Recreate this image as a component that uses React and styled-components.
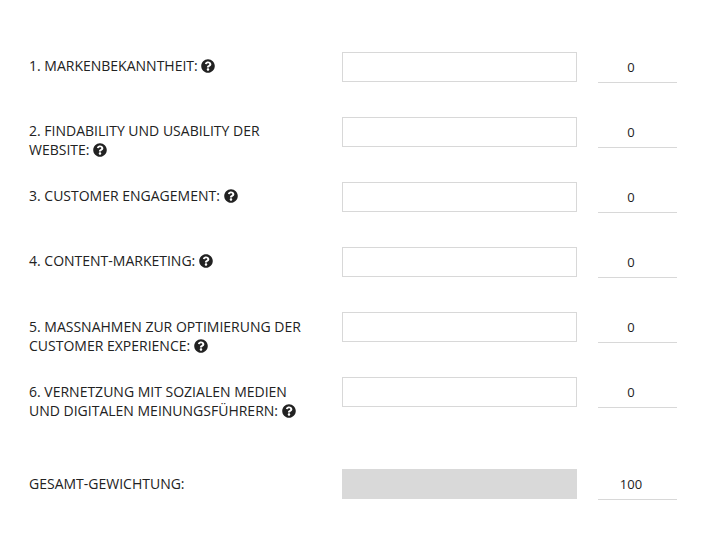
import React from "react";
import styled, { createGlobalStyle } from "styled-components";
import { FaQuestionCircle } from "react-icons/fa";

const GlobalStyle = createGlobalStyle`
  * { box-sizing: border-box; }
  body { margin: 0; background: #fff; }
`;

const Form = styled.main`
  width: 726px;
  height: 548px;
  padding: 52px 0 0 29px;
  background: #fff;
  color: #222;
  font-family: "Open Sans", sans-serif;
  overflow: hidden;
`;

const Row = styled.div`
  display: grid;
  grid-template-columns: 313px 235px 100px;
  align-items: start;
  height: ${(p) => (p.$last ? "92px" : "65.1px")};
`;

const Label = styled.label`
  padding-top: 4.2px;
  font-size: 14px;
  line-height: 19px;
  white-space: nowrap;
`;

const Line = styled.span`
  display: block;
`;

const HelpIcon = styled(FaQuestionCircle)`
  width: 14px;
  height: 14px;
  vertical-align: -2px;
`;

const Field = styled.input`
  width: 235px;
  height: 30px;
  padding: 0 8px;
  border: 1px solid ${(p) => (p.disabled ? "#d9d9d9" : "#d8d8d8")};
  border-radius: 0;
  background: ${(p) => (p.disabled ? "#d9d9d9" : "#fff")};
`;

const Value = styled.output`
  width: 79px;
  height: 31px;
  margin-left: 21px;
  padding-right: 13px;
  border-bottom: 1px solid #d8d8d8;
  font-size: 13px;
  line-height: 30px;
  text-align: center;
`;

const criteria = [
  ["1. MARKENBEKANNTHEIT:"],
  ["2. FINDABILITY UND USABILITY DER", "WEBSITE:"],
  ["3. CUSTOMER ENGAGEMENT:"],
  ["4. CONTENT-MARKETING:"],
  ["5. MASSNAHMEN ZUR OPTIMIERUNG DER", "CUSTOMER EXPERIENCE:"],
  ["6. VERNETZUNG MIT SOZIALEN MEDIEN", "UND DIGITALEN MEINUNGSFÜHRERN:"],
];

export default function App() {
  return (
    <>
      <GlobalStyle />
      <Form>
        {criteria.map((lines, i) => (
          <Row key={i} $last={i === criteria.length - 1}>
            <Label htmlFor={`weight-${i}`}>
              {lines.map((line, j) => (
                <Line key={j}>
                  {line}
                  {j === lines.length - 1 && <> <HelpIcon /></>}
                </Line>
              ))}
            </Label>
            <Field id={`weight-${i}`} />
            <Value>0</Value>
          </Row>
        ))}
        <Row>
          <Label htmlFor="total">GESAMT-GEWICHTUNG:</Label>
          <Field id="total" disabled />
          <Value>100</Value>
        </Row>
      </Form>
    </>
  );
}
